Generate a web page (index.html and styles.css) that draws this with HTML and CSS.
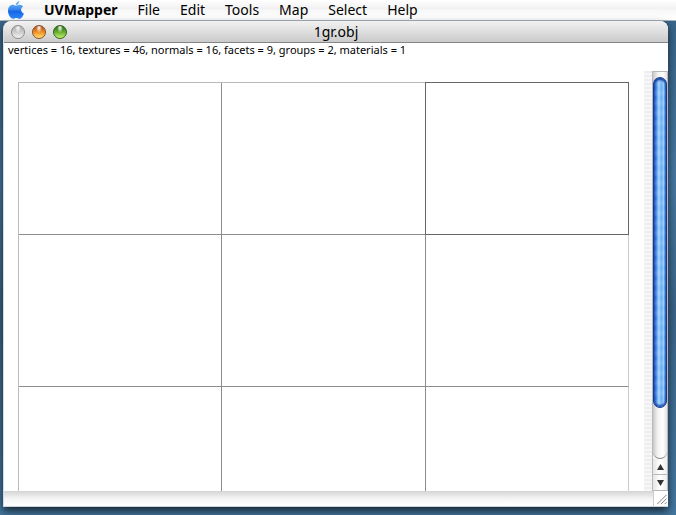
FILE: index.html
```html
<!DOCTYPE html>
<html lang="en">
<head>
    <meta charset="UTF-8">
    <meta name="viewport" content="width=device-width, initial-scale=1.0">
    <title>UVMapper</title>
    <link rel="stylesheet" href="styles.css">
</head>
<body>
    <nav class="menu-bar">
        <button type="button" class="apple-button" aria-label="Apple menu">
            <svg width="16" height="18" viewBox="0 0 16 18">
                <defs>
                    <linearGradient id="appleBlue" x1="0" y1="0" x2="0" y2="1">
                        <stop offset="0" stop-color="#78bdf5"/>
                        <stop offset="0.45" stop-color="#3b88ed"/>
                        <stop offset="0.6" stop-color="#1765e8"/>
                        <stop offset="1" stop-color="#2f8cfa"/>
                    </linearGradient>
                </defs>
                <path fill="url(#appleBlue)" d="M11.300 0c.2 2-1.500 4-3.500 4C7.600 2.200 9.300.2 11.300 0zM8 4.800c.8 0 1.900-1 3.700-1 1.300 0 2.700.7 3.400 1.700-2.900 1.700-2.500 5.700.8 7-.8 2.300-2.500 5.300-4.300 5.300-1.200 0-1.800-.8-3.300-.8s-2.100.8-3.300.8C2.800 17.800 0 13.700 0 9.800c0-3.800 2.400-6 4.800-6 1.500 0 2.400 1 3.200 1z"/>
            </svg>
        </button>
        <button type="button" class="app-name">UVMapper</button>
        <button type="button">File</button>
        <button type="button">Edit</button>
        <button type="button">Tools</button>
        <button type="button">Map</button>
        <button type="button">Select</button>
        <button type="button">Help</button>
    </nav>

    <main class="window">
        <header class="title-bar">
            <div class="lights">
                <button type="button" class="light close" aria-label="Close"></button>
                <button type="button" class="light minimize" aria-label="Minimize"></button>
                <button type="button" class="light zoom" aria-label="Zoom"></button>
            </div>
            <h1>1gr.obj</h1>
        </header>

        <p class="status">vertices = 16, textures = 46, normals = 16, facets = 9, groups = 2, materials = 1</p>

        <div class="view">
            <div class="canvas">
                <!-- UV facets -->
                <div class="mesh">
                    <div class="facet"></div>
                    <div class="facet"></div>
                    <div class="facet selected"></div>
                    <div class="facet"></div>
                    <div class="facet"></div>
                    <div class="facet last"></div>
                    <div class="facet"></div>
                    <div class="facet"></div>
                    <div class="facet last"></div>
                </div>
            </div>
            <div class="gutter"></div>
            <div class="scrollbar">
                <div class="track">
                    <div class="thumb"></div>
                </div>
                <button type="button" class="arrow" aria-label="Scroll up">
                    <svg width="7" height="6" viewBox="0 0 7 6"><path fill="#333" d="M3.500 0L7 6H0z"/></svg>
                </button>
                <button type="button" class="arrow" aria-label="Scroll down">
                    <svg width="7" height="6" viewBox="0 0 7 6"><path fill="#333" d="M0 0h7L3.500 6z"/></svg>
                </button>
            </div>
        </div>

        <footer class="bottom-bar">
            <svg class="grip" width="15" height="15" viewBox="0 0 15 15">
                <path fill="none" stroke="#777" d="M3.500 13.500l10-10M7.500 13.500l6-6M11.500 13.500l2-2"/>
            </svg>
        </footer>
    </main>
</body>
</html>
```
FILE: styles.css
```css
* {
    box-sizing: border-box;
}

body {
    display: flex;
    flex-direction: column;
    height: 100vh;
    margin: 0;
    overflow: hidden;
    font-family: "Noto Sans", "Open Sans", sans-serif;
    color: #000;
    background: linear-gradient(#376285, #4678a0 35%, #3b6487 60%, #44779f);
}

button {
    padding: 0;
    border: none;
    background: none;
    font: inherit;
    color: inherit;
}

.menu-bar {
    display: flex;
    align-items: center;
    gap: 20px;
    height: 21px;
    padding-left: 8px;
    font-size: 14px;
    line-height: 20px;
    background: linear-gradient(#fff, #f1f1f1 45%, #f7f7f7 50%, #fff);
    border-bottom: 1px solid #aab4bb;
}

.apple-button {
    display: flex;
}

.app-name {
    font-weight: bold;
}

.window {
    flex: 1;
    display: flex;
    flex-direction: column;
    min-height: 0;
    margin: 0 8px 8px 3px;
    background: #fff;
    border-left: 1px solid #d5dde2;
    border-radius: 8px 8px 0 0;
    box-shadow: 0 4px 8px rgba(0, 0, 0, 0.7);
}

.title-bar {
    display: flex;
    align-items: center;
    height: 22px;
    padding: 0 7px;
    background: linear-gradient(#f2f2f2, #cbcbcb);
    border-bottom: 1px solid #858585;
    border-radius: 8px 8px 0 0;
}

.title-bar h1 {
    flex: 1;
    margin: 0;
    padding-right: 56px;
    font-size: 14px;
    font-weight: normal;
    line-height: 20px;
    text-align: center;
}

.lights {
    display: flex;
    gap: 7px;
}

.light {
    width: 14px;
    height: 14px;
    border: 1px solid #6c6c6c;
    border-radius: 50%;
}

.close {
    border-color: #8c8c8c;
    background: radial-gradient(ellipse at 50% 15%, #fff 0, transparent 35%), linear-gradient(#aaa, #ccc 50%, #f4f4f4);
}

.minimize {
    border-color: #8a4c26;
    background: radial-gradient(ellipse at 50% 15%, #fff 0, transparent 35%), linear-gradient(#ae4b16, #f08e25 50%, #ffe46e);
}

.zoom {
    border-color: #35631d;
    background: radial-gradient(ellipse at 50% 15%, #fff 0, transparent 35%), linear-gradient(#286516, #63ad2b 50%, #c4f070);
}

.status {
    height: 28px;
    margin: 0;
    padding-left: 4px;
    font-size: 11px;
    line-height: 13px;
    white-space: nowrap;
}

.view {
    flex: 1;
    display: flex;
    min-height: 0;
}

.canvas {
    flex: 1;
    padding: 11px 15px 0 14px;
    overflow: hidden;
}

.mesh {
    display: grid;
    grid-template-columns: repeat(3, 1fr);
    grid-auto-rows: 152px;
    border-top: 1px solid #bbb;
    border-left: 1px solid #bbb;
}

.facet {
    border-right: 1px solid #8c8c8c;
    border-bottom: 1px solid #8c8c8c;
}

.facet.last {
    border-right-color: #ccc;
}

.facet.selected {
    margin: -1px 0 0 -1px;
    border: 1px solid #666;
}

.gutter {
    width: 8px;
    background: repeating-linear-gradient(#eee 0, #eee 2px, #f7f7f7 2px, #f7f7f7 4px);
}

.scrollbar {
    display: flex;
    flex-direction: column;
    width: 16px;
    background: #f4f4f4;
    border: 1px solid #b8b8b8;
    border-width: 1px 1px 0;
}

.track {
    flex: 1;
    padding-top: 5px;
    background: linear-gradient(to right, #c9c9c9, #f3f3f3 35%, #fff 70%, #e2e2e2);
    border-bottom: 1px solid #888;
    border-radius: 0 0 7px 7px;
}

.thumb {
    height: 87%;
    border: 1px solid #123c91;
    border-radius: 7px;
    background:
        repeating-linear-gradient(rgba(255, 255, 255, 0) 0, rgba(255, 255, 255, 0.15) 5px, rgba(255, 255, 255, 0) 10px),
        linear-gradient(to right, #1a4cb8, #3f86e6 20%, #a5d3fb 40%, #63aaf3 60%, #8ccafb 80%, #2860c4);
    box-shadow: inset 0 2px 2px #163f9c, inset 0 -2px 2px #2455b8;
}

.arrow {
    display: flex;
    align-items: center;
    justify-content: center;
    height: 16px;
    background: linear-gradient(to right, #e6e6e6, #fff 50%, #eee);
    border-bottom: 1px solid #b8b8b8;
}

.bottom-bar {
    display: flex;
    justify-content: flex-end;
    height: 16px;
    background: linear-gradient(#d4d4d4, #f4f4f4 50%, #fff);
    border-bottom: 1px solid #ccd3d8;
}

.grip {
    background: #fff;
    border-left: 1px solid #ccc;
}
```
